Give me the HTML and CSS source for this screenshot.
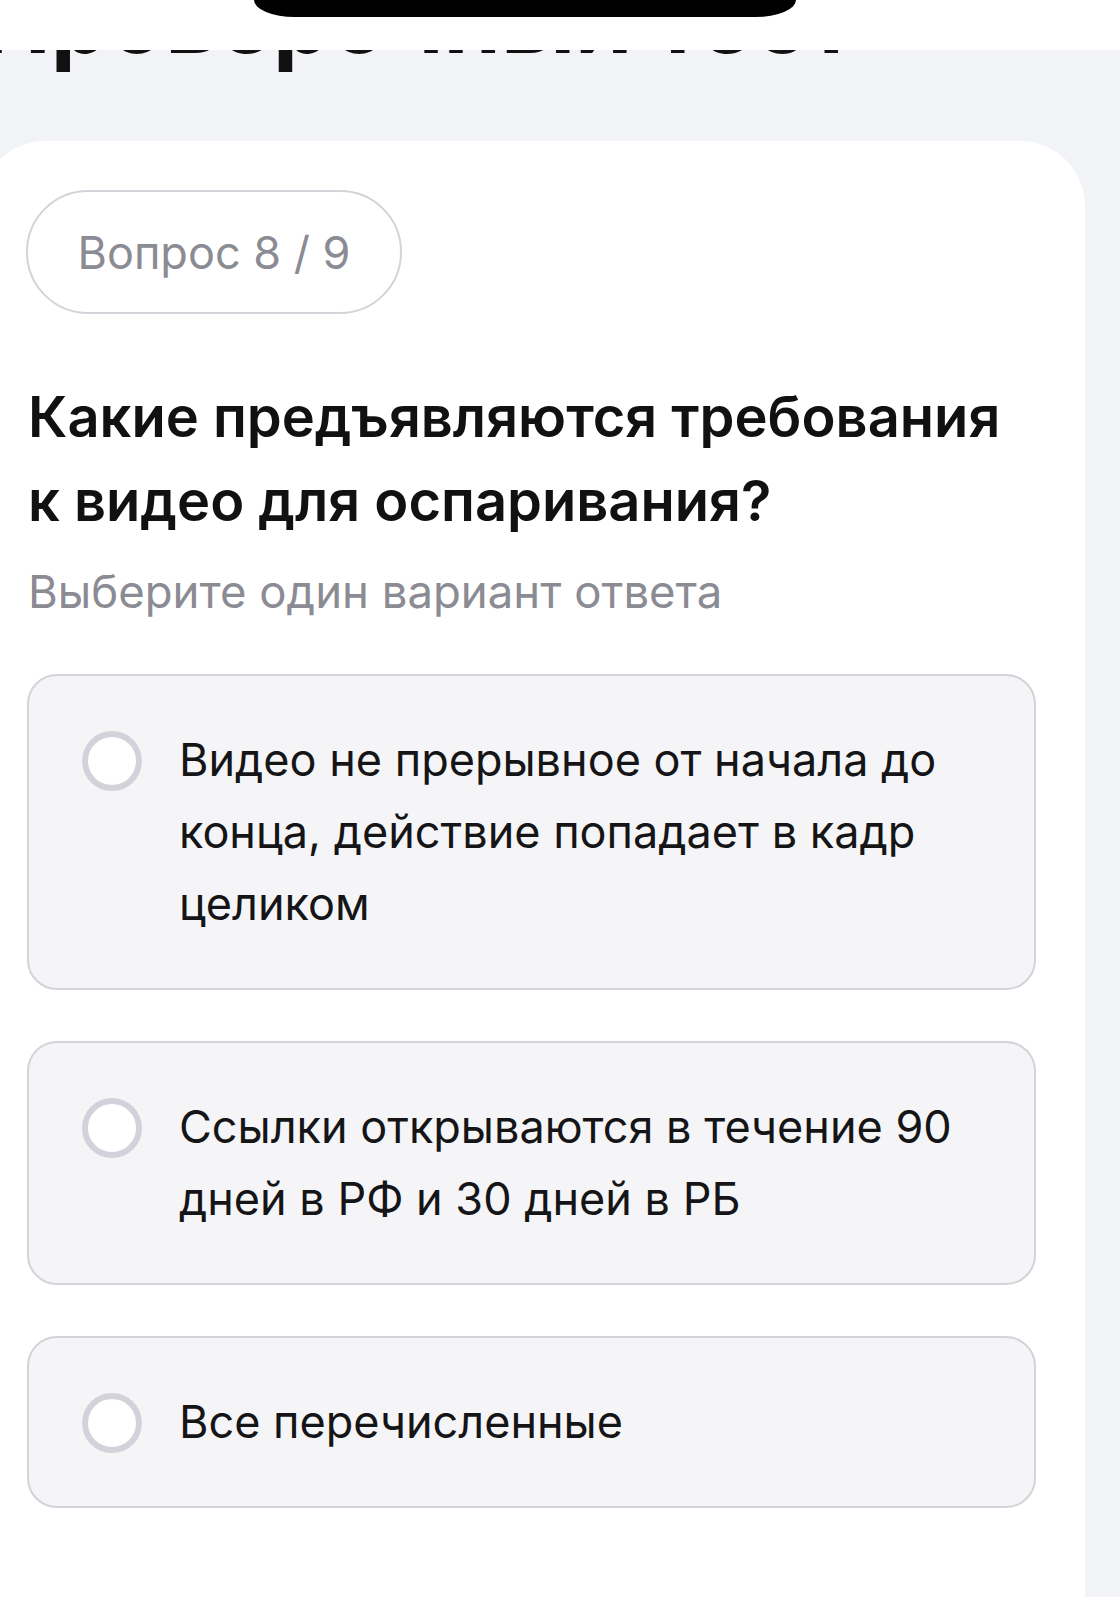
FILE: index.html
```html
<!DOCTYPE html>
<html lang="ru">
<head>
    <meta charset="UTF-8">
    <meta name="viewport" content="width=device-width, initial-scale=1.0">
    <title>Проверочный тест</title>
    <link rel="stylesheet" href="styles.css">
</head>
<body>
<div class="status-bar">
    <div class="island"></div>
</div>
<div class="page">
    <h1 class="page-title">Проверочный тест</h1>
    <div class="quiz-card">
        <div class="step-badge">Вопрос 8 / 9</div>
        <h2 class="question">Какие предъявляются требования к видео для оспаривания?</h2>
        <p class="hint">Выберите один вариант ответа</p>
        <div class="answers">
            <label class="answer">
                <span class="radio"></span>
                <span class="answer-text">Видео не прерывное от начала до конца, действие попадает в кадр целиком</span>
            </label>
            <label class="answer">
                <span class="radio"></span>
                <span class="answer-text">Ссылки открываются в течение 90 дней в РФ и 30 дней в РБ</span>
            </label>
            <label class="answer">
                <span class="radio"></span>
                <span class="answer-text">Все перечисленные</span>
            </label>
        </div>
    </div>
</div>
</body>
</html>
```

FILE: styles.css
```css
html, body {
    margin: 0;
    padding: 0;
}
body {
    font-family: Inter, "Noto Sans", sans-serif;
    background-color: #f2f3f7;
    color: #111;
    height: 1597px;
    overflow: hidden;
}

/* phone status bar lies over the scrolled page */
.status-bar {
    position: fixed;
    top: 0;
    left: 0;
    right: 0;
    height: 50px;
    background-color: #fff;
    z-index: 10;
}
.island {
    width: 542px;
    height: 17px;
    margin-left: 254px;
    background-color: #000;
    border-radius: 0 0 48px 48px / 0 0 20px 20px;
}

.page-title {
    margin: -30px 0 0 -18px;
    font-size: 92px;
    line-height: 100px;
    font-weight: 700;
    white-space: nowrap;
}

.quiz-card {
    box-sizing: border-box;
    width: 1105px;
    min-height: 1500px;
    margin: 71px 0 0 -20px;
    padding: 49px 49px 0 46px;
    background-color: #fff;
    border-radius: 65px 65px 0 0;
}

.step-badge {
    box-sizing: border-box;
    display: inline-flex;
    align-items: center;
    justify-content: center;
    width: 376px;
    height: 124px;
    border: 2px solid #d3d3d9;
    border-radius: 62px;
    font-size: 45px;
    color: #8b8b93;
}

.question {
    max-width: 990px;
    margin: 61px 0 0 2px;
    font-size: 56px;
    line-height: 84px;
    font-weight: 600;
}

.hint {
    margin: 19px 0 0 2px;
    font-size: 45.5px;
    line-height: 60px;
    color: #8b8b93;
}

.answers {
    display: flex;
    flex-direction: column;
    gap: 51px;
    margin-top: 52px;
    padding-left: 1px;
}
.answer {
    display: flex;
    align-items: flex-start;
    gap: 37px;
    padding: 48px 50px 48px 53px;
    background-color: #f5f5f7;
    border: 2px solid #d3d3d9;
    border-radius: 30px;
}
.radio {
    box-sizing: border-box;
    flex: none;
    width: 60px;
    height: 60px;
    margin-top: 7px;
    background-color: #fff;
    border: 6px solid #d2d2da;
    border-radius: 50%;
}
.answer-text {
    font-size: 45px;
    line-height: 72px;
    color: #151517;
}
```
